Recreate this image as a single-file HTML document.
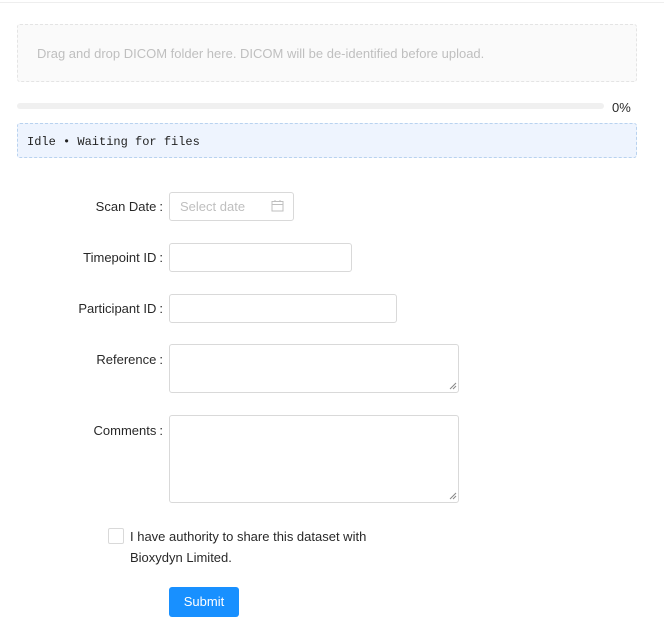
<!DOCTYPE html>
<html><head><meta charset="utf-8"><style>
*{box-sizing:border-box;margin:0;padding:0}
body{width:664px;height:638px;background:#fff;font-family:"Liberation Sans",sans-serif;font-size:13px;color:rgba(0,0,0,.85);position:relative;overflow:hidden}
.a{position:absolute}
.lbl{position:absolute;text-align:right;width:163px;left:0;font-size:13px}
.lbl span{margin-left:3px}
.inp{position:absolute;border:1px solid #d9d9d9;border-radius:3px;background:#fff}
</style></head><body>
<div class="a" style="left:0;top:2px;width:664px;height:1px;background:#eee"></div>
<div class="a" style="left:17px;top:24px;width:620px;height:58px;background:#fafafa;border:1px dashed #e4e4e4;border-radius:3px"></div>
<div class="a" style="left:37px;top:46px;color:#bfbfbf;font-size:13px">Drag and drop DICOM folder here. DICOM will be de-identified before upload.</div>
<div class="a" style="left:17px;top:103px;width:587px;height:6px;background:#f0f0f0;border-radius:3px"></div>
<div class="a" style="left:612px;top:100px;font-size:13px">0%</div>
<div class="a" style="left:17px;top:123px;width:620px;height:35px;background:#eef4fe;border:1px dashed #b8d2ef;border-radius:3px"></div>
<div class="a" style="left:27px;top:135px;font-family:'Liberation Mono',monospace;font-size:12px;color:#222">Idle • Waiting for files</div>

<div class="lbl" style="top:199px">Scan Date<span>:</span></div>
<div class="inp" style="left:169px;top:192px;width:125px;height:29px"></div>
<div class="a" style="left:180px;top:199px;color:#bfbfbf">Select date</div>
<svg class="a" style="left:271px;top:200px" width="13" height="12" viewBox="0 0 13 12"><rect x="1" y="1.5" width="11" height="9.5" fill="none" stroke="#bfbfbf"/><line x1="1" y1="4.5" x2="12" y2="4.5" stroke="#bfbfbf"/><line x1="4" y1="0" x2="4" y2="2" stroke="#bfbfbf"/><line x1="9" y1="0" x2="9" y2="2" stroke="#bfbfbf"/></svg>

<div class="lbl" style="top:250px">Timepoint ID<span>:</span></div>
<div class="inp" style="left:169px;top:243px;width:183px;height:29px"></div>
<div class="lbl" style="top:301px">Participant ID<span>:</span></div>
<div class="inp" style="left:169px;top:294px;width:228px;height:29px"></div>
<div class="lbl" style="top:352px">Reference<span>:</span></div>
<div class="inp" style="left:169px;top:344px;width:290px;height:49px"></div>
<div class="lbl" style="top:423px">Comments<span>:</span></div>
<div class="inp" style="left:169px;top:415px;width:290px;height:88px"></div>
<svg class="a" style="left:449px;top:382px" width="8" height="8"><path d="M1 7L7 1M4 7L7 4" stroke="#888"/></svg>
<svg class="a" style="left:449px;top:492px" width="8" height="8"><path d="M1 7L7 1M4 7L7 4" stroke="#888"/></svg>

<div class="inp" style="left:108px;top:528px;width:16px;height:16px;border-radius:2px"></div>
<div class="a" style="left:130px;top:526px;line-height:21px;font-size:13px">I have authority to share this dataset with<br>Bioxydyn Limited.</div>
<div class="a" style="left:169px;top:587px;width:70px;height:30px;background:#1890ff;border-radius:3px;color:#fff;text-align:center;line-height:30px;font-size:13px">Submit</div>
</body></html>
